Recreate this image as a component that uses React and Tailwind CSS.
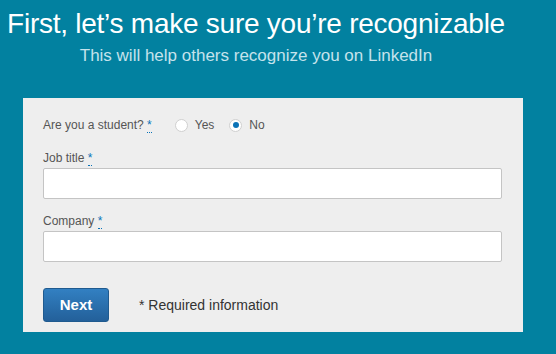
export default function App() {
    return (
        <div className="w-[556px] h-[354px] overflow-hidden bg-[#0281a0] font-['Liberation_Sans',Arial,sans-serif]">
            <div className="w-[512px] flex flex-col items-center pt-[8px]">
                <h1 className="text-[28px] leading-[32px] text-white whitespace-nowrap tracking-[-0.25px]">First, let’s make sure you’re recognizable</h1>
                <p className="text-[17px] leading-[20px] text-[#c5e3ec] mt-[6px] whitespace-nowrap">This will help others recognize you on LinkedIn</p>
            </div>
            <div className="ml-[23px] mt-[32px] w-[500px] h-[234px] bg-[#eeeeee] px-[20px] pt-[19px]">
                <div className="flex items-center h-[16px] text-[12px] text-[#555]">
                    <span>Are you a student? <Req /></span>
                    <Radio label="Yes" className="ml-[23px]" />
                    <Radio label="No" checked className="ml-[15px]" />
                </div>
                <Field label="Job title" className="mt-[17px]" />
                <Field label="Company" className="mt-[14px]" />
                <div className="flex items-center mt-[26px]">
                    <button className="w-[66px] h-[34px] rounded-[3px] border border-[#1f5a8f] bg-gradient-to-b from-[#3280c2] to-[#23609a] text-white font-bold text-[15px]">Next</button>
                    <span className="ml-[30px] text-[14px] text-[#333]">* Required information</span>
                </div>
            </div>
        </div>
    );
}

function Req() {
    return <abbr className="text-[#0a73b8] no-underline border-b border-dotted border-[#0a73b8]" title="required">*</abbr>;
}

function Radio({ label, checked, className }) {
    return (
        <label className={"flex items-center gap-[7px] " + className}>
            <span className="w-[13px] h-[13px] rounded-full bg-white border border-[#d0d0d0] flex items-center justify-center">
                {checked && <span className="w-[6px] h-[6px] rounded-full bg-[#0b73b7]" />}
            </span>
            <span>{label}</span>
        </label>
    );
}

function Field({ label, className }) {
    return (
        <div className={className}>
            <div className="text-[12px] leading-[16px] text-[#555]">{label} <Req /></div>
            <div className="mt-[2px] h-[31px] w-[459px] bg-white border border-[#c4c4c4] rounded-[2px]" />
        </div>
    );
}
